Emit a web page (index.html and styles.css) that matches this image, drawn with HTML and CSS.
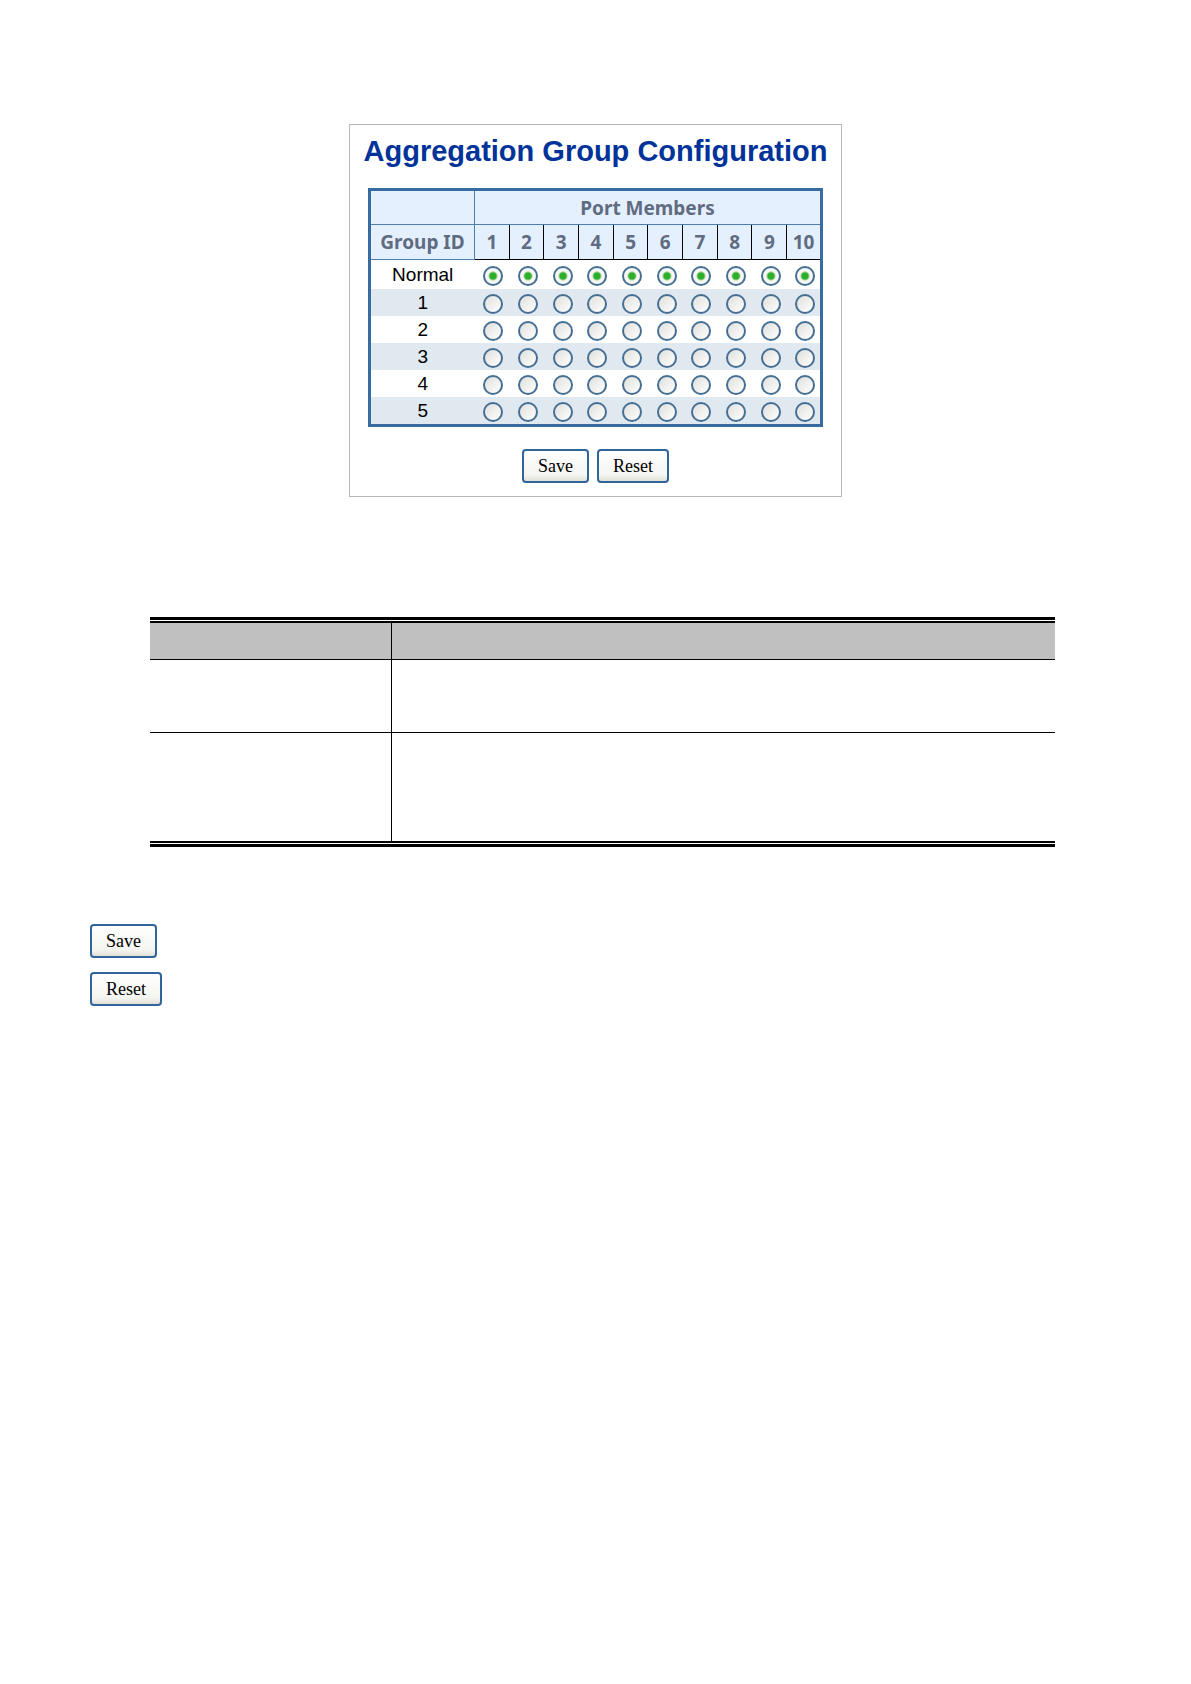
FILE: index.html
```html
<!DOCTYPE html>
<html lang="en">
  <head>
    <meta charset="UTF-8" />
    <meta name="viewport" content="width=device-width, initial-scale=1.0" />
    <title>Aggregation Group Configuration</title>
    <link rel="stylesheet" href="styles.css">
  </head>
  <body>
    <div class="page">
      <form class="panel" id="groupForm">
        <h1>Aggregation Group Configuration</h1>
        <table class="groups">
          <thead>
            <tr>
              <th class="group-col"></th>
              <th colspan="10">Port Members</th>
            </tr>
            <tr class="ports">
              <th class="group-col">Group ID</th>
              <th>1</th>
              <th>2</th>
              <th>3</th>
              <th>4</th>
              <th>5</th>
              <th>6</th>
              <th>7</th>
              <th>8</th>
              <th>9</th>
              <th>10</th>
            </tr>
          </thead>
          <tbody id="groupRows"></tbody>
        </table>
        <div class="buttons">
          <button type="button">Save</button>
          <button type="reset">Reset</button>
        </div>
      </form>

      <div class="description">
        <table>
          <tr class="head">
            <th class="object"></th>
            <th></th>
          </tr>
          <tr class="short">
            <td></td>
            <td></td>
          </tr>
          <tr class="tall">
            <td></td>
            <td></td>
          </tr>
        </table>
      </div>

      <div class="button-list">
        <button type="button">Save</button>
        <button type="reset" form="groupForm">Reset</button>
      </div>
    </div>

    <script>
      const groups = ["Normal", "1", "2", "3", "4", "5"];
      const ports = 10;
      const body = document.getElementById("groupRows");

      // Each port belongs to one group, so radios share a name per column
      groups.forEach(function (group) {
        const row = body.insertRow();
        row.insertCell().textContent = group;
        for (let port = 1; port <= ports; port++) {
          const radio = document.createElement("input");
          radio.type = "radio";
          radio.name = "port" + port;
          radio.value = group;
          radio.defaultChecked = group === "Normal";
          radio.setAttribute("aria-label", "Port " + port + ", group " + group);
          row.insertCell().appendChild(radio);
        }
      });
    </script>
  </body>
</html>
```
FILE: styles.css
```css
* {
  box-sizing: border-box;
}
body {
  margin: 0;
  background-color: white;
  font-family: "Liberation Sans", Arial, sans-serif;
}
.page {
  padding: 124px 90px 40px;
}
.panel {
  display: flex;
  flex-direction: column;
  align-items: center;
  width: fit-content;
  margin: 0 auto;
  padding: 9px 14px 13px;
  border: 1px solid #b8b8b8;
}
h1 {
  margin: 0 0 20px;
  font-size: 29px;
  line-height: 34px;
  color: #003399;
}
.groups {
  width: 455px;
  table-layout: fixed;
  border-collapse: collapse;
  border: 3px solid #386b9f;
}
.groups th {
  height: 35px;
  padding: 0;
  border: 1px solid #4f81b0;
  background-color: #e5f0ff;
  color: #5f6b80;
  font-family: "Noto Sans", Tahoma, sans-serif;
  font-size: 19px;
  line-height: 24px;
}
.groups .group-col {
  width: 105px;
}
.groups .ports th + th {
  border-bottom-color: black;
  border-right-color: black;
}
.groups .ports th + th + th {
  border-left-color: black;
}
.groups .ports th:last-child {
  border-right: none;
}
.groups td {
  height: 27px;
  padding: 2px 0 0;
  text-align: center;
  font-size: 19px;
  line-height: 24px;
}
.groups td + td {
  padding: 4px 0 0 3px;
}
.groups tbody tr:first-child td,
.groups tbody tr:last-child td {
  height: 29px;
}
.groups tbody tr:nth-child(even) {
  background-color: #e0e8f0;
}
input[type="radio"] {
  appearance: none;
  display: block;
  width: 20px;
  height: 20px;
  margin: 0 auto;
  border: 2px solid #466f94;
  border-radius: 50%;
  background: linear-gradient(135deg, #dfdfdc, #ffffff);
}
input[type="radio"]:checked {
  background: radial-gradient(circle, #2fae2b 3px, #f6f6f3 5px);
}
button {
  height: 34px;
  padding: 0 14px;
  border: 2px solid #2f659b;
  border-radius: 4px;
  background: linear-gradient(#ffffff, #f4f4f0 80%, #e2e0d8);
  color: black;
  font-family: "Liberation Serif", "Times New Roman", serif;
  font-size: 18px;
}
.buttons {
  display: flex;
  gap: 8px;
  margin-top: 22px;
}
.description {
  margin: 120px 46px 0 60px;
  padding: 1px 0;
  border-top: 3px solid black;
  border-bottom: 3px solid black;
}
.description table {
  width: 100%;
  border-collapse: separate;
  border-spacing: 0;
  border-top: 2px solid black;
  border-bottom: 2px solid black;
}
.description th,
.description td {
  padding: 0;
  border-bottom: 1px solid black;
}
.description th + th,
.description td + td {
  border-left: 1px solid black;
}
.description .tall td {
  border-bottom: none;
}
.description .object {
  width: 241px;
}
.head {
  height: 37px;
  background-color: #c0c0c0;
}
.short {
  height: 73px;
}
.tall {
  height: 108px;
}
.button-list {
  display: flex;
  flex-direction: column;
  align-items: flex-start;
  gap: 14px;
  margin-top: 77px;
}
```
